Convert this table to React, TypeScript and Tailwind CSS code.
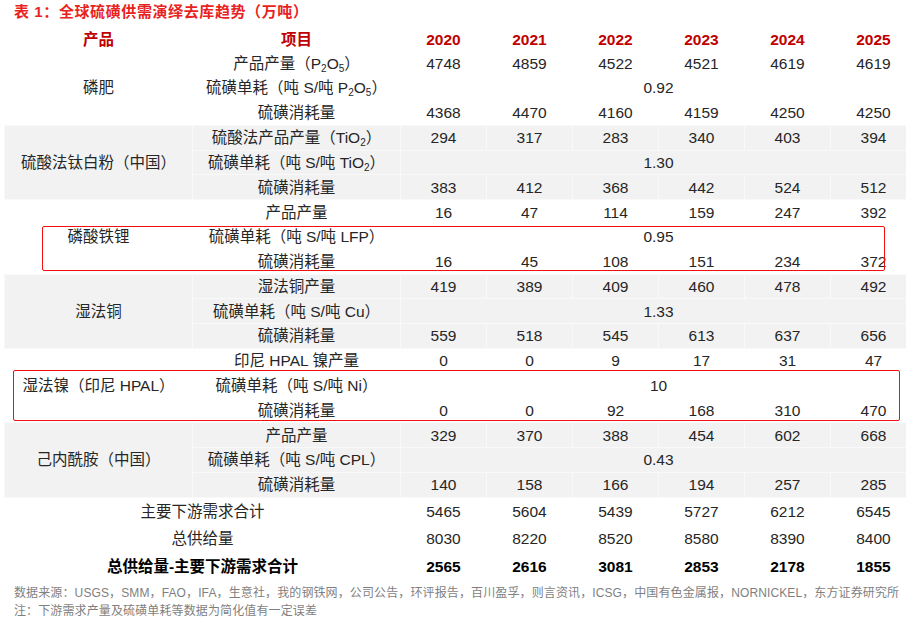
import React from "react";

type Row = {
  item: React.ReactNode;
  values?: (string | number)[];
  single?: string;
};

type Group = {
  product: string;
  gray: boolean;
  rows: Row[];
};

const years = ["2020", "2021", "2022", "2023", "2024", "2025"];

const Sub = ({ children }: { children: React.ReactNode }) => (
  <span className="text-[10px] relative top-[3px]">{children}</span>
);

const P2O5 = (
  <>
    P<Sub>2</Sub>O<Sub>5</Sub>
  </>
);
const TiO2 = (
  <>
    TiO<Sub>2</Sub>
  </>
);

const groups: Group[] = [
  {
    product: "磷肥",
    gray: false,
    rows: [
      { item: <>产品产量（{P2O5}）</>, values: [4748, 4859, 4522, 4521, 4619, 4619] },
      { item: <>硫磺单耗（吨 S/吨 {P2O5}）</>, single: "0.92" },
      { item: "硫磺消耗量", values: [4368, 4470, 4160, 4159, 4250, 4250] },
    ],
  },
  {
    product: "硫酸法钛白粉（中国）",
    gray: true,
    rows: [
      { item: <>硫酸法产品产量（{TiO2}）</>, values: [294, 317, 283, 340, 403, 394] },
      { item: <>硫磺单耗（吨 S/吨 {TiO2}）</>, single: "1.30" },
      { item: "硫磺消耗量", values: [383, 412, 368, 442, 524, 512] },
    ],
  },
  {
    product: "磷酸铁锂",
    gray: false,
    rows: [
      { item: "产品产量", values: [16, 47, 114, 159, 247, 392] },
      { item: "硫磺单耗（吨 S/吨 LFP）", single: "0.95" },
      { item: "硫磺消耗量", values: [16, 45, 108, 151, 234, 372] },
    ],
  },
  {
    product: "湿法铜",
    gray: true,
    rows: [
      { item: "湿法铜产量", values: [419, 389, 409, 460, 478, 492] },
      { item: "硫磺单耗（吨 S/吨 Cu）", single: "1.33" },
      { item: "硫磺消耗量", values: [559, 518, 545, 613, 637, 656] },
    ],
  },
  {
    product: "湿法镍（印尼 HPAL）",
    gray: false,
    rows: [
      { item: "印尼 HPAL 镍产量", values: [0, 0, 9, 17, 31, 47] },
      { item: "硫磺单耗（吨 S/吨 Ni）", single: "10" },
      { item: "硫磺消耗量", values: [0, 0, 92, 168, 310, 470] },
    ],
  },
  {
    product: "己内酰胺（中国）",
    gray: true,
    rows: [
      { item: "产品产量", values: [329, 370, 388, 454, 602, 668] },
      { item: "硫磺单耗（吨 S/吨 CPL）", single: "0.43" },
      { item: "硫磺消耗量", values: [140, 158, 166, 194, 257, 285] },
    ],
  },
];

const totals = [
  { label: "主要下游需求合计", values: [5465, 5604, 5439, 5727, 6212, 6545], bold: false },
  { label: "总供给量", values: [8030, 8220, 8520, 8580, 8390, 8400], bold: false },
  { label: "总供给量-主要下游需求合计", values: [2565, 2616, 3081, 2853, 2178, 1855], bold: true },
];

export default function App() {
  return (
    <div
      className="relative w-[906px] h-[620px] overflow-hidden bg-white text-[#262626]"
      style={{ fontFamily: '"Liberation Sans", "Noto Sans CJK SC", sans-serif' }}
    >
      <div className="h-[24px] pl-[14px] flex items-center text-[15px] tracking-[0.6px] font-bold text-[#e8231e] whitespace-nowrap">
        表 1：全球硫磺供需演绎去库趋势（万吨）
      </div>

      <table className="mt-[4px] ml-[4px] w-[912px] table-fixed border-collapse text-[15.5px] leading-none">
        <colgroup>
          <col className="w-[188px]" />
          <col className="w-[208px]" />
          {years.map((y) => (
            <col key={y} className="w-[86px]" />
          ))}
        </colgroup>
        <thead>
          <tr className="h-[23px] font-bold text-[#c00000]">
            <th className="p-0 text-center">产品</th>
            <th className="p-0 text-center">项目</th>
            {years.map((y) => (
              <th key={y} className="p-0 text-center">
                {y}
              </th>
            ))}
          </tr>
        </thead>
        <tbody>
          {groups.map((g) =>
            g.rows.map((r, i) => {
              const cell = g.gray
                ? "p-0 text-center whitespace-nowrap bg-[#f2f2f2] border border-[#f9f9f9]"
                : "p-0 text-center whitespace-nowrap";
              return (
                <tr key={g.product + i} className="h-[24.8px]">
                  {i === 0 && (
                    <td rowSpan={3} className={cell}>
                      {g.product}
                    </td>
                  )}
                  <td className={cell}>{r.item}</td>
                  {r.single ? (
                    <td colSpan={6} className={cell}>
                      {r.single}
                    </td>
                  ) : (
                    r.values!.map((v, j) => (
                      <td key={j} className={cell}>
                        {v}
                      </td>
                    ))
                  )}
                </tr>
              );
            })
          )}
          {totals.map((t) => (
            <tr
              key={t.label}
              className={t.bold ? "h-[27.7px] font-bold text-black" : "h-[27.7px]"}
            >
              <td colSpan={2} className="p-0 text-center whitespace-nowrap">
                {t.label}
              </td>
              {t.values.map((v, j) => (
                <td key={j} className="p-0 text-center">
                  {v}
                </td>
              ))}
            </tr>
          ))}
        </tbody>
      </table>

      <div className="pl-[14px] pt-[4px] text-[12px] tracking-[0.12px] leading-[18px] text-[#7f7f7f] whitespace-nowrap">
        <div>
          数据来源：USGS，SMM，FAO，IFA，生意社，我的钢铁网，公司公告，环评报告，百川盈孚，则言资讯，ICSG，中国有色金属报，NORNICKEL，东方证券研究所
        </div>
        <div>注：下游需求产量及硫磺单耗等数据为简化值有一定误差</div>
      </div>

      <div className="absolute left-[42px] top-[226px] w-[843px] h-[45px] border-[1.5px] border-[#f01010] rounded-[2px]" />
      <div className="absolute left-[13px] top-[370px] w-[887px] h-[51px] border-[1.5px] border-[#f01010] rounded-[2px]" />
    </div>
  );
}
